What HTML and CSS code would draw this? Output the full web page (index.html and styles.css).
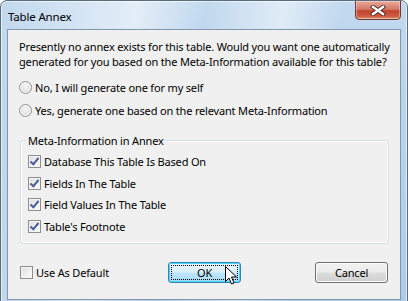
FILE: index.html
```html
<!DOCTYPE html>
<html>
<head>
<meta charset="utf-8">
<link rel="stylesheet" href="styles.css">
</head>
<body>
<div class="window">
  <div class="titlebar">
    <span class="title">Table Annex</span>
    <div class="close">
      <svg width="16" height="11" viewBox="0 0 16 11">
        <path d="M3 2 L13 9 M13 2 L3 9" stroke="#4a2a28" stroke-width="4.2" stroke-linecap="square"/>
        <path d="M3 2 L13 9 M13 2 L3 9" stroke="#ffffff" stroke-width="2.4" stroke-linecap="square"/>
      </svg>
    </div>
  </div>
  <div class="client">
    <p class="intro">Presently no annex exists for this table. Would you want one automatically<br>generated for you based on the Meta-Information available for this table?</p>
    <div class="radio"><span class="rb"></span><span>No, I will generate one for my self</span></div>
    <div class="radio"><span class="rb"></span><span>Yes, generate one based on the relevant Meta-Information</span></div>
    <div class="group">
      <span class="legend">Meta-Information in Annex</span>
      <div class="check"><span class="cb on"></span><span>Database This Table Is Based On</span></div>
      <div class="check"><span class="cb on"></span><span>Fields In The Table</span></div>
      <div class="check"><span class="cb on"></span><span>Field Values In The Table</span></div>
      <div class="check"><span class="cb on"></span><span>Table's Footnote</span></div>
    </div>
    <div class="footer">
      <div class="check"><span class="cb"></span><span>Use As Default</span></div>
      <div class="btn default"><span class="focus">OK</span></div>
      <div class="btn">Cancel</div>
    </div>
  </div>
  <svg class="cursor" width="14" height="20" viewBox="0 0 14 20">
    <path d="M0.5 0.5 L0.5 15.5 L4 12 L6.5 18 L9 17 L6.5 11 L11.5 11 Z" fill="#fff" stroke="#000" stroke-width="1"/>
  </svg>
</div>
</body>
</html>
```
FILE: styles.css
```css
html, body {
  margin: 0;
  padding: 0;
  background: #fff;
}
body {
  font-family: "Noto Sans", "DejaVu Sans", sans-serif;
  font-size: 11px;
  letter-spacing: -0.17px;
  color: #000;
}
.window {
  position: relative;
  width: 408px;
  height: 303px;
  box-sizing: border-box;
  border: 1px solid #5c6c7c;
  border-radius: 7px 7px 0 0;
  background:
    linear-gradient(100deg, rgba(255,255,255,0) 0%, rgba(255,255,255,0.55) 30%, rgba(255,255,255,0) 45%, rgba(255,255,255,0.5) 62%, rgba(255,255,255,0) 75%),
    linear-gradient(180deg, #c2d9ef 0%, #b9d3ec 40%, #aecbe8 100%);
  box-shadow: inset 0 0 0 1px rgba(255,255,255,0.6);
  overflow: hidden;
}
.titlebar {
  height: 28px;
  display: flex;
  align-items: flex-start;
}
.title {
  padding: 8px 0 0 7px;
  line-height: 15px;
  font-size: 11.5px;
}
.close {
  margin-left: auto;
  margin-right: 6px;
  margin-top: -1px;
  width: 46px;
  height: 20px;
  box-sizing: border-box;
  border: 1px solid #6d3b34;
  border-radius: 0 0 4px 4px;
  background: linear-gradient(180deg, #e9a99b 0%, #d47a68 45%, #c2432c 55%, #cf5c40 85%, #e09a7e 100%);
  box-shadow: inset 0 0 0 1px rgba(255,255,255,0.35);
  display: flex;
  align-items: center;
  justify-content: center;
}
.client {
  margin: 0 6px;
  border: 1px solid #8097ad;
  background: #f0f0f0;
  height: 271px;
  box-sizing: border-box;
  padding: 9px 0 0 11px;
}
.intro {
  margin: 0;
  line-height: 15px;
  white-space: nowrap;
}
.radio {
  display: flex;
  align-items: center;
  gap: 3px;
  height: 15px;
  line-height: 15px;
  white-space: nowrap;
}
.radio:first-of-type { margin-top: 11px; }
.radio + .radio { margin-top: 8px; }
.rb {
  width: 13px;
  height: 13px;
  box-sizing: border-box;
  border-radius: 50%;
  border: 1px solid #8e8f8f;
  background: radial-gradient(circle at 50% 40%, #f6f6f6 0%, #e2e2e2 55%, #cfcfcf 100%);
  box-shadow: inset 0 0 0 1px #fff;
  flex: none;
}
.group {
  position: relative;
  margin: 22px 0 0 1px;
  width: 369px;
  height: 104px;
  box-sizing: border-box;
  border: 1px solid #d5dfe5;
  border-radius: 3px;
  box-shadow: inset 0 0 0 1px #fff;
  padding: 13px 0 0 7px;
  display: flex;
  flex-direction: column;
  gap: 6.5px;
}
.legend {
  position: absolute;
  top: -8px;
  left: 5px;
  padding: 0 2px;
  background: #f0f0f0;
  line-height: 15px;
}
.check {
  display: flex;
  align-items: center;
  gap: 3px;
  height: 15px;
  line-height: 15px;
  white-space: nowrap;
}
.cb {
  width: 13px;
  height: 13px;
  box-sizing: border-box;
  border: 1px solid #8e8f8f;
  background: linear-gradient(135deg, #dcdcdc 0%, #f4f4f4 70%, #fff 100%);
  box-shadow: inset 0 0 0 1px #f4f4f4;
  position: relative;
  flex: none;
}
.cb.on::after {
  content: "";
  position: absolute;
  left: 3px;
  top: 0px;
  width: 3px;
  height: 7px;
  border: solid #4a5f97;
  border-width: 0 2px 2px 0;
  transform: rotate(40deg);
}
.footer {
  display: flex;
  align-items: center;
  margin-top: 17px;
  height: 22px;
  margin-left: 1px;
}
.footer .check { width: 148px; }
.btn {
  width: 73px;
  height: 21px;
  box-sizing: border-box;
  border: 1px solid #707070;
  border-radius: 3px;
  background: linear-gradient(180deg, #f2f2f2 0%, #ebebeb 48%, #dddddd 52%, #cfcfcf 100%);
  box-shadow: inset 0 0 0 1px #fcfcfc;
  display: flex;
  align-items: center;
  justify-content: center;
  line-height: 15px;
}
.btn.default {
  border-color: #3c7fb1;
  box-shadow: inset 0 0 0 1px #48d8fb;
  background: linear-gradient(180deg, #eaf6fd 0%, #d9f0fc 48%, #bee6fd 52%, #a7d9f5 100%);
  padding: 2px;
}
.btn.default .focus {
  flex: 1;
  align-self: stretch;
  border: 1px dotted #000;
  display: flex;
  align-items: center;
  justify-content: center;
}
.btn + .btn { margin-left: 74px; }
.cursor {
  position: absolute;
  left: 224px;
  top: 265px;
}
```
